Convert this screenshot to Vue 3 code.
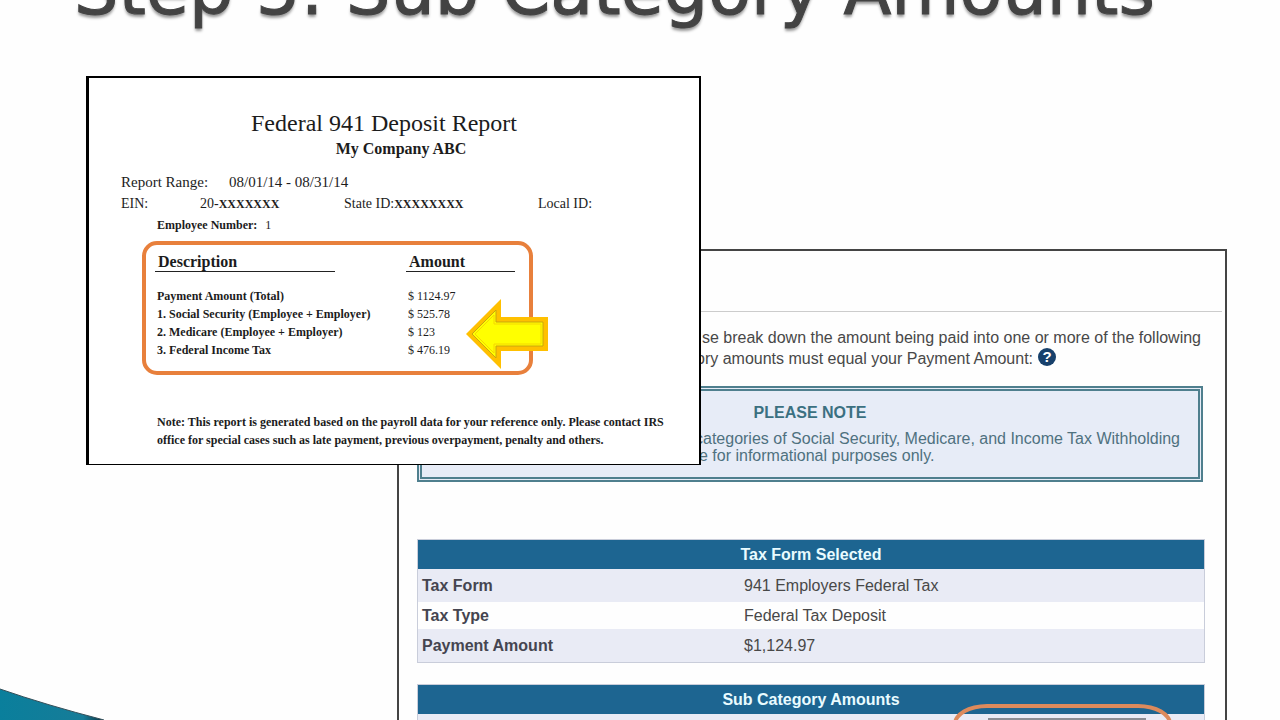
<script setup>
import { ref } from 'vue'

const deposits = [
  { label: 'Payment Amount (Total)', amount: '$ 1124.97' },
  { label: '1. Social Security (Employee + Employer)', amount: '$ 525.78' },
  { label: '2. Medicare (Employee + Employer)', amount: '$ 123' },
  { label: '3. Federal Income Tax', amount: '$ 476.19' },
]
const taxForm = [
  { label: 'Tax Form', value: '941 Employers Federal Tax' },
  { label: 'Tax Type', value: 'Federal Tax Deposit' },
  { label: 'Payment Amount', value: '$1,124.97' },
]
const subAmount = ref('')
</script>

<template>
  <main class="slide">
    <h1 class="slide-title">Step 5: Sub Category Amounts</h1>

    <svg class="wave" viewBox="0 0 110 32" aria-hidden="true">
      <defs>
        <linearGradient id="teal" x1="0" y1="0" x2="1" y2="0">
          <stop offset="0" stop-color="#0a7f9c" />
          <stop offset="0.8" stop-color="#167c98" />
          <stop offset="1" stop-color="#0b2f3d" />
        </linearGradient>
      </defs>
      <path d="M0 1 Q46 17 104 32 H0Z" fill="url(#teal)" />
      <path d="M0 1 Q46 17 104 32" fill="none" stroke="#36505a" stroke-width="1" />
    </svg>

    <section class="portal">
      <div class="portal-head"></div>
      <div class="intro">
        <p class="intro-first">se break down the amount being paid into one or more of the following</p>
        <p class="intro-second">
          ory amounts must equal your Payment Amount:
          <button class="help" type="button">?</button>
        </p>
      </div>

      <aside class="notice">
        <h2>PLEASE NOTE</h2>
        <p class="notice-first">categories of Social Security, Medicare, and Income Tax Withholding</p>
        <p class="notice-second">e for informational purposes only.</p>
      </aside>

      <table class="grid-table">
        <colgroup><col class="name-col" /><col /></colgroup>
        <thead>
          <tr><th colspan="2" scope="colgroup">Tax Form Selected</th></tr>
        </thead>
        <tbody>
          <tr v-for="row in taxForm" :key="row.label">
            <th scope="row">{{ row.label }}</th>
            <td>{{ row.value }}</td>
          </tr>
        </tbody>
      </table>

      <div class="sub-block">
        <table class="grid-table">
          <colgroup><col class="name-col" /><col /></colgroup>
          <thead>
            <tr><th id="sub-heading" colspan="2" scope="colgroup">Sub Category Amounts</th></tr>
          </thead>
          <tbody>
            <tr class="entry">
              <th></th>
              <td><input v-model="subAmount" type="text" aria-labelledby="sub-heading" /></td>
            </tr>
          </tbody>
        </table>
        <div class="ring"></div>
      </div>
    </section>

    <article class="report">
      <h2>Federal 941 Deposit Report</h2>
      <h3>My Company ABC</h3>
      <div class="range"><span>Report Range:</span><span>08/01/14 - 08/31/14</span></div>
      <div class="ids">
        <span>EIN:</span>
        <span>20-<b>XXXXXXX</b></span>
        <span>State ID:<b>XXXXXXXX</b></span>
        <span>Local ID:</span>
      </div>
      <p class="employee"><b>Employee Number:</b><span>1</span></p>

      <div class="highlight">
        <table class="deposits">
          <thead>
            <tr>
              <th scope="col"><span>Description</span></th>
              <th scope="col"><span>Amount</span></th>
            </tr>
          </thead>
          <tbody>
            <tr v-for="d in deposits" :key="d.label">
              <th scope="row">{{ d.label }}</th>
              <td>{{ d.amount }}</td>
            </tr>
          </tbody>
        </table>
        <svg class="arrow" viewBox="0 0 82 70" aria-hidden="true">
          <path d="M0 35 L35 0 V18 H82 V52 H35 V70Z" fill="#ffc000" />
          <path d="M6 35 L30 11 V23 H77 V47 H30 V59Z" fill="#ffff00" stroke="#c9a60c" stroke-width="1" />
          <path d="M9 35 L28 16 V25 H75 V45 H28 V54Z" fill="#ffff00" stroke="#f5d800" stroke-width="1" />
        </svg>
      </div>

      <p class="footnote">
        Note: This report is generated based on the payroll data for your reference only. Please contact IRS
        office for special cases such as late payment, previous overpayment, penalty and others.
      </p>
    </article>
  </main>
</template>

<style>
body {
  margin: 0;
  background: #fefefe;
}
</style>

<style scoped>
* {
  box-sizing: border-box;
}
h1, h2, h3, p {
  margin: 0;
}
.slide {
  position: relative;
  display: grid;
  grid-template-columns: minmax(0, 86fr) minmax(0, 311fr) minmax(0, 304fr) minmax(0, 526fr) minmax(0, 53fr);
  grid-template-rows: 76px 173px auto 1fr;
  height: 100vh;
  overflow: hidden;
  background: #fefefe;
}
.slide-title {
  grid-area: 1 / 1 / 2 / 6;
  margin-top: -50px;
  padding-left: 74px;
  font: 400 70px/80px "DejaVu Sans", sans-serif;
  color: #434343;
  white-space: nowrap;
  -webkit-text-stroke: 1px #434343;
  text-shadow: 0 3px 3px rgba(0, 0, 0, 0.4);
}
.wave {
  position: absolute;
  left: 0;
  bottom: 0;
  width: 110px;
  height: 32px;
}

/* payment portal */
.portal {
  grid-area: 3 / 3 / 5 / 5;
  padding: 0 20px 0 18px;
  border: 2px solid #444;
  border-bottom: 0;
  font: 16px/20px "Liberation Sans", Arial, sans-serif;
  color: #484848;
}
.portal-head {
  height: 61px;
  margin: 0 -17px 0 -18px;
  border-bottom: 1px solid #ccc;
}
.intro {
  padding-top: 15px;
  line-height: 21px;
  white-space: nowrap;
}
.intro-first {
  padding-left: 285px;
}
.intro-second {
  display: flex;
  gap: 5px;
  padding-left: 279px;
}
.help {
  width: 18px;
  height: 18px;
  padding: 0;
  border: 0;
  border-radius: 50%;
  background: #17406b;
  color: #fff;
  font: bold 15px/18px "Liberation Sans", Arial, sans-serif;
}
.notice {
  height: 96px;
  margin: 17px 2px 0 0;
  padding: 13px 0 0;
  border: 5px double #4f7f8e;
  background: #e7ecf7;
  color: #4f717f;
  line-height: 17px;
  white-space: nowrap;
}
.notice h2 {
  margin-bottom: 9px;
  font-size: 16px;
  line-height: 17px;
  text-align: center;
  color: #3b7081;
}
.notice-first {
  padding-left: 273px;
}
.notice-second {
  padding-left: 277px;
}
.grid-table {
  width: 100%;
  margin-top: 57px;
  border: 1px solid #c9cdda;
  border-spacing: 0;
  table-layout: fixed;
}
.name-col {
  width: 326px;
}
.grid-table th,
.grid-table td {
  height: 30px;
  padding: 0 4px;
  text-align: left;
  line-height: 20px;
}
.grid-table thead th {
  height: 29px;
  background: #1d6591;
  color: #e9fbff;
  text-align: center;
}
.grid-table tbody th {
  color: #454550;
}
.grid-table tbody td {
  padding: 0;
}
.grid-table tbody tr:nth-child(odd) > * {
  height: 33px;
  background: #e9ebf5;
}
.grid-table tbody tr:nth-child(even) > * {
  height: 27px;
}
.sub-block {
  position: relative;
  margin-top: 21px;
}
.sub-block .grid-table {
  margin-top: 0;
}
.entry input {
  display: block;
  width: 158px;
  height: 25px;
  margin-left: 244px;
  border: 2px solid #8a8d94;
  background: #fff;
}
.ring {
  position: absolute;
  top: 20px;
  left: 68%;
  width: 219px;
  height: 80px;
  border: 4px solid #dd8a5c;
  border-radius: 34px / 20px;
}

/* deposit report */
.report {
  grid-area: 2 / 2 / 4 / 4;
  z-index: 1;
  padding: 31px 0 15px;
  border: 2px solid #000;
  border-left-width: 3px;
  border-bottom-width: 1px;
  background: #fff;
  font: 12px/18px "Liberation Serif", "Times New Roman", serif;
  color: #1c1c1c;
  white-space: nowrap;
}
.report h2,
.report h3 {
  padding-right: 20px;
  text-align: center;
}
.report h2 {
  font-size: 24px;
  font-weight: 400;
  line-height: 28px;
}
.report h3 {
  padding: 0 0 0 14px;
  font-size: 16px;
  line-height: 23px;
}
.range {
  display: grid;
  grid-template-columns: 108px auto;
  margin-top: 12px;
  padding-left: 32px;
  font-size: 15px;
  line-height: 21px;
}
.ids {
  display: grid;
  grid-template-columns: 79px 144px 194px auto;
  padding-left: 32px;
  font-size: 14px;
  line-height: 21px;
}
.ids b {
  font-size: 12px;
}
.employee {
  display: flex;
  gap: 8px;
  padding-left: 68px;
  line-height: 20px;
}
.highlight {
  position: relative;
  width: 391px;
  margin: 6px 0 0 53px;
  padding: 7px 9px 12px;
  border: 4px solid #e8803c;
  border-radius: 15px;
}
.deposits {
  width: 100%;
  border-spacing: 0;
  table-layout: fixed;
}
.deposits th,
.deposits td {
  padding: 0 0 0 2px;
  text-align: left;
  line-height: 18px;
}
.deposits thead th {
  padding: 0 0 15px;
  font-size: 16px;
}
.deposits thead th:first-child {
  width: 251px;
}
.deposits thead span {
  display: block;
  width: 109px;
  padding-left: 3px;
  border-bottom: 1px solid #222;
  line-height: 19px;
}
.deposits thead th:first-child span {
  width: 180px;
}
.arrow {
  position: absolute;
  top: 54px;
  left: 320px;
  width: 82px;
  height: 70px;
}
.footnote {
  padding: 38px 20px 0 68px;
  font-weight: bold;
  white-space: normal;
}
</style>
